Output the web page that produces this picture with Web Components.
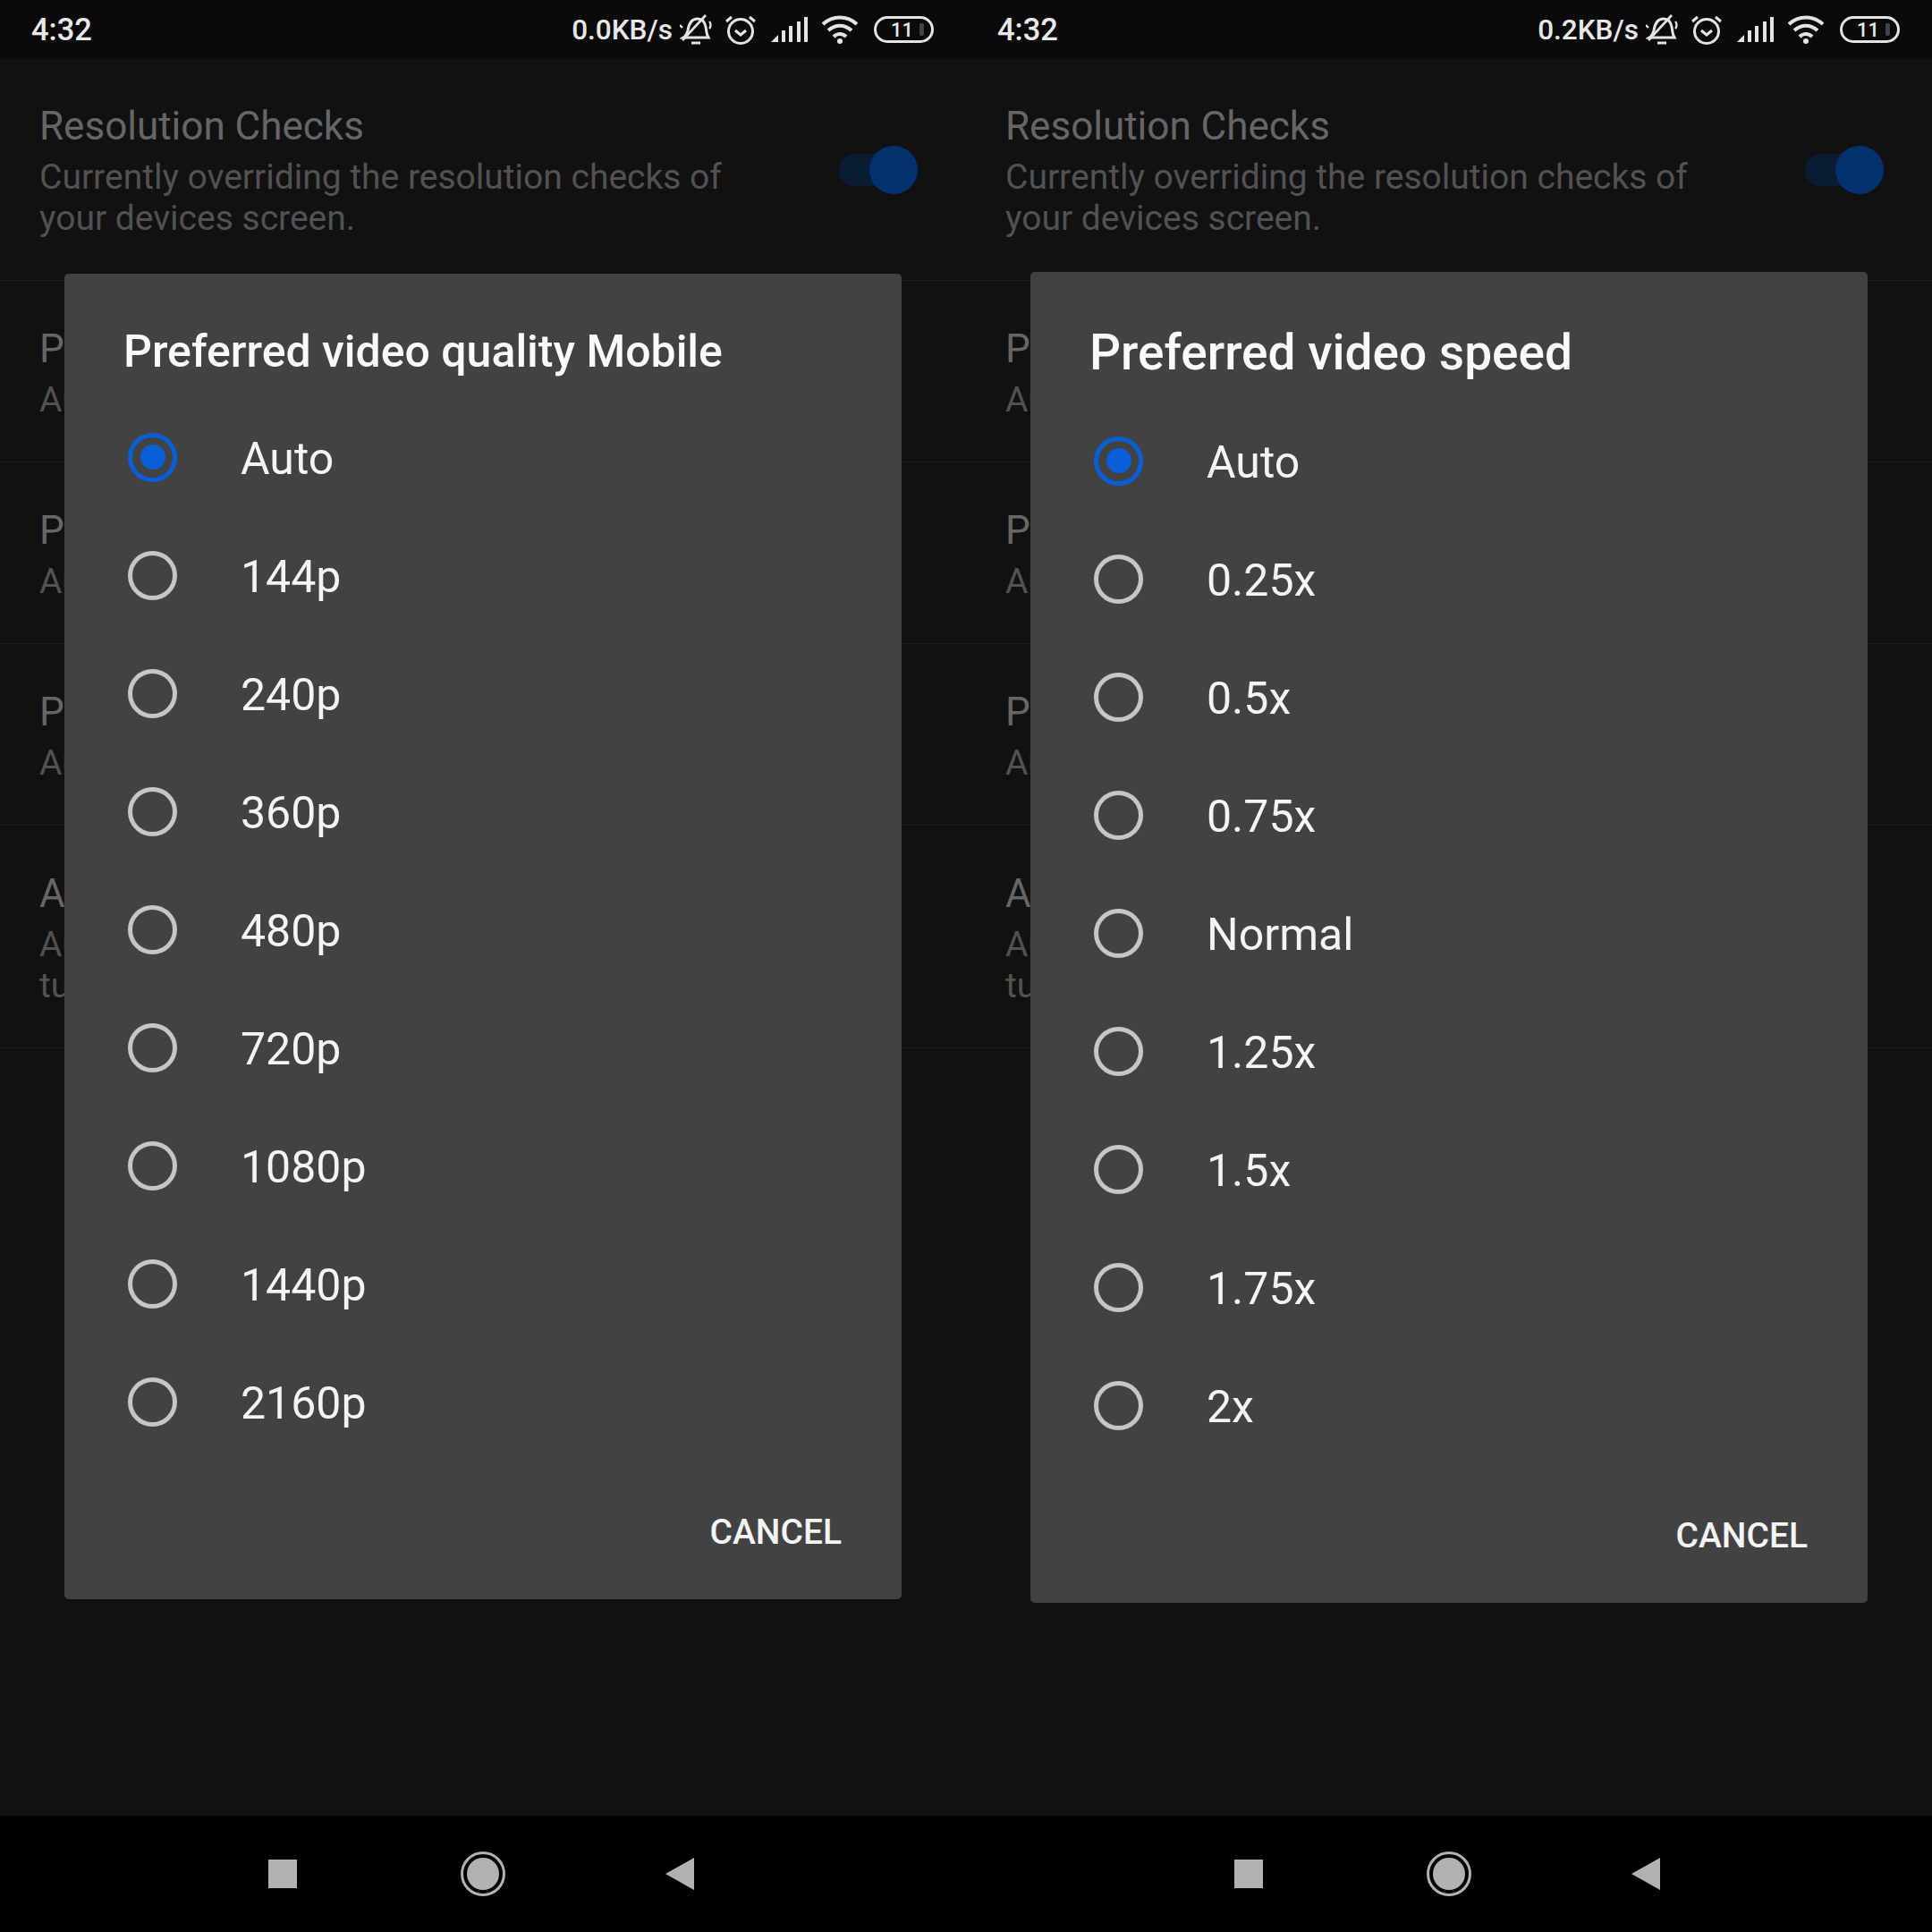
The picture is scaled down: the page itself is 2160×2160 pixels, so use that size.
<!DOCTYPE html>
<html>
<head>
<meta charset="utf-8">
<title>Preferred video settings</title>
<style>
	body {
		margin: 0;
		background: #000;
		font-family: Roboto, "Liberation Sans", sans-serif;
	}
	#screens {
		display: flex;
		width: 2160px;
		height: 2160px;
	}
</style>
</head>
<body>
<div id="screens">
	<phone-screen>
		<status-bar slot="status" speed="0.0KB/s"></status-bar>
		<settings-row style="--pad-top: 47px" on>
			<span slot="title">Resolution Checks</span>
			Currently overriding the resolution checks of<br>your devices screen.
		</settings-row>
		<settings-row><span slot="title">P</span>Au</settings-row>
		<settings-row><span slot="title">P</span>Au</settings-row>
		<settings-row><span slot="title">P</span>Au</settings-row>
		<settings-row><span slot="title">A</span>Au<br>tu</settings-row>
		<pref-dialog slot="dialog" heading="Preferred video quality Mobile"
			options="Auto,144p,240p,360p,480p,720p,1080p,1440p,2160p"
			style="--top: 306px; --head: 139px; --title-size: 50px; --title-center: 87px"></pref-dialog>
	</phone-screen>
	<phone-screen>
		<status-bar slot="status" speed="0.2KB/s"></status-bar>
		<settings-row style="--pad-top: 47px" on>
			<span slot="title">Resolution Checks</span>
			Currently overriding the resolution checks of<br>your devices screen.
		</settings-row>
		<settings-row><span slot="title">P</span>Au</settings-row>
		<settings-row><span slot="title">P</span>Au</settings-row>
		<settings-row><span slot="title">P</span>Au</settings-row>
		<settings-row><span slot="title">A</span>Au<br>tu</settings-row>
		<pref-dialog slot="dialog" heading="Preferred video speed"
			options="Auto,0.25x,0.5x,0.75x,Normal,1.25x,1.5x,1.75x,2x"
			style="--top: 304px; --head: 145px; --title-size: 55px; --title-center: 90px"></pref-dialog>
	</phone-screen>
</div>

<script>
	class PhoneScreen extends HTMLElement {
		constructor () {
			super();
			this.attachShadow({ mode: "open" }).innerHTML = `
				<style>
					:host {
						display: flex;
						flex-direction: column;
						position: relative;
						width: 1080px;
						height: 2160px;
						overflow: hidden;
					}
					#list {
						flex: 1;
						background: #111;
					}
				</style>
				<slot name="status"></slot>
				<div id="list"><slot></slot></div>
				<nav-bar></nav-bar>
				<slot name="dialog"></slot>
			`;
		}
	}

	class StatusBar extends HTMLElement {
		constructor () {
			super();
			this.attachShadow({ mode: "open" }).innerHTML = `
				<style>
					:host {
						display: flex;
						align-items: center;
						height: 66px;
						padding: 0 36px 0 35px;
						box-sizing: border-box;
						background: #0a0a0a;
						color: #e8e8e8;
						font-weight: 500;
					}
					#time {
						font-size: 34.500px;
						margin-right: auto;
					}
					#speed {
						font-size: 31.500px;
						margin-right: 8px;
					}
					svg {
						display: block;
						fill: none;
						stroke: #e4e4e4;
						stroke-width: 3;
					}
					#bell { margin-right: 15px; }
					#alarm { margin-right: 17px; }
					#signal { margin-right: 15px; }
					#wifi { margin-right: 17px; }
					#battery {
						display: flex;
						align-items: center;
						justify-content: center;
						box-sizing: border-box;
						width: 67px;
						height: 30px;
						border: 3px solid #e4e4e4;
						border-radius: 15px;
						font-size: 22px;
						padding-right: 6px;
					}
					#battery i {
						width: 5px;
						height: 14px;
						background: #444;
						border-radius: 2px;
						margin-left: 7px;
						margin-right: -14px;
					}
				</style>
				<span id="time">4:32</span>
				<span id="speed"></span>
				<svg id="bell" width="36" height="36" viewBox="0 0 36 36">
					<path d="M4 27c3-2 4-4 5-8 1-7 4-13 11-13 5 0 8 4 9 9l1 6c0 2 1 4 2 6z"/>
					<path d="M3 30 29 2" stroke-width="2.600"/>
					<path d="M13 33h10"/>
					<path d="M0 13l3 3M33 9c2 2 2 6 0 8" stroke-width="2.400"/>
				</svg>
				<svg id="alarm" width="34" height="36" viewBox="0 0 34 36">
					<circle cx="17" cy="20" r="13.500"/>
					<path d="M11 19l6 5 6-5"/>
					<path d="M1 9l6-5M33 9l-6-5"/>
				</svg>
				<svg id="signal" width="41" height="30" viewBox="0 0 41 30" style="stroke-width: 4">
					<path d="M0 29l8-8v8z" fill="#e4e4e4" stroke="none"/>
					<path d="M14 29V16M22 29V11M31 29V6M39 29V1"/>
				</svg>
				<svg id="wifi" width="42" height="34" viewBox="0 0 42 34" style="stroke-width: 4">
					<path d="M2 11c11-10 27-10 38 0"/>
					<path d="M8 18c8-7 18-7 26 0"/>
					<path d="M14 25c4-4 10-4 14 0"/>
					<circle cx="21" cy="30" r="3" fill="#e4e4e4" stroke="none"/>
				</svg>
				<div id="battery">11<i></i></div>
			`;
			this.shadowRoot.querySelector("#speed").textContent = this.getAttribute("speed");
		}
	}

	class SettingsRow extends HTMLElement {
		constructor () {
			super();
			const toggle = this.hasAttribute("on") ? "<settings-toggle></settings-toggle>" : "";
			this.attachShadow({ mode: "open" }).innerHTML = `
				<style>
					:host {
						display: flex;
						align-items: center;
						justify-content: space-between;
						padding: var(--pad-top, 49px) 54px 46px 44px;
						border-bottom: 1px solid #1c1c1c;
						margin-bottom: -1px;
					}
					#title {
						font-size: 44px;
						line-height: 57px;
						color: #666;
					}
					#sub {
						font-size: 39px;
						line-height: 46px;
						margin-top: 5px;
						color: #525252;
					}
				</style>
				<div>
					<div id="title"><slot name="title"></slot></div>
					<div id="sub"><slot></slot></div>
				</div>
				${toggle}
			`;
		}
	}

	class SettingsToggle extends HTMLElement {
		constructor () {
			super();
			this.attachShadow({ mode: "open" }).innerHTML = `
				<style>
					:host {
						display: flex;
						align-items: center;
					}
					#track {
						width: 60px;
						height: 36px;
						margin-right: -26px;
						border-radius: 18px;
						background: #0a1c34;
					}
					#knob {
						position: relative;
						width: 54px;
						height: 54px;
						border-radius: 50%;
						background: #03326e;
					}
				</style>
				<div id="track"></div>
				<div id="knob"></div>
			`;
		}
	}

	class PrefDialog extends HTMLElement {
		constructor () {
			super();
			this.attachShadow({ mode: "open" }).innerHTML = `
				<style>
					:host {
						display: block;
						position: absolute;
						left: 72px;
						top: var(--top);
						width: 936px;
						background: #424242;
						border-radius: 5px;
						color: #f4f4f4;
					}
					header {
						height: var(--head);
						padding-left: 66px;
						box-sizing: border-box;
					}
					h1 {
						margin: 0;
						font-size: var(--title-size);
						font-weight: 500;
						line-height: calc(var(--title-center) * 2);
						color: #fafafa;
					}
					footer {
						display: flex;
						justify-content: flex-end;
						align-items: flex-start;
						height: 155px;
						padding-right: 67px;
						box-sizing: border-box;
					}
					footer span {
						margin-top: 50px;
						font-size: 39px;
						line-height: 60px;
						font-weight: 500;
					}
				</style>
				<header><h1></h1></header>
				<div id="options"></div>
				<footer><span>CANCEL</span></footer>
			`;
			this.shadowRoot.querySelector("h1").textContent = this.getAttribute("heading");
			const options = this.shadowRoot.querySelector("#options");
			this.getAttribute("options").split(",").forEach((label, i) => {
				const option = document.createElement("radio-option");
				option.textContent = label;
				if (i === 0) option.setAttribute("checked", "");
				options.append(option);
			});
		}
	}

	class RadioOption extends HTMLElement {
		constructor () {
			super();
			this.attachShadow({ mode: "open" }).innerHTML = `
				<style>
					:host {
						display: flex;
						align-items: center;
						gap: 71px;
						height: 132px;
						padding-left: 71px;
						font-size: 50px;
					}
					#ring {
						display: flex;
						align-items: center;
						justify-content: center;
						box-sizing: border-box;
						width: 55px;
						height: 55px;
						border: 5px solid #c6c6c6;
						border-radius: 50%;
					}
					:host([checked]) #ring {
						border-color: #0a5fd8;
					}
					:host([checked]) #ring::after {
						content: "";
						width: 28px;
						height: 28px;
						border-radius: 50%;
						background: #0a5fd8;
					}
					#label {
						margin-top: 4px;
					}
				</style>
				<div id="ring"></div>
				<span id="label"><slot></slot></span>
			`;
		}
	}

	class NavBar extends HTMLElement {
		constructor () {
			super();
			this.attachShadow({ mode: "open" }).innerHTML = `
				<style>
					:host {
						display: flex;
						align-items: center;
						justify-content: center;
						gap: 174px;
						height: 130px;
						background: #000;
					}
					svg {
						display: block;
						fill: #b2b2b2;
					}
				</style>
				<svg width="50" height="50" viewBox="0 0 50 50"><rect x="9" y="9" width="32" height="32"/></svg>
				<svg width="50" height="50" viewBox="0 0 50 50">
					<circle cx="25" cy="25" r="23.500" fill="none" stroke="#b2b2b2" stroke-width="3"/>
					<circle cx="25" cy="25" r="18"/>
				</svg>
				<svg width="50" height="50" viewBox="0 0 50 50"><path d="M37 7v36L5 25z"/></svg>
			`;
		}
	}

	customElements.define("phone-screen", PhoneScreen);
	customElements.define("status-bar", StatusBar);
	customElements.define("settings-row", SettingsRow);
	customElements.define("settings-toggle", SettingsToggle);
	customElements.define("radio-option", RadioOption);
	customElements.define("pref-dialog", PrefDialog);
	customElements.define("nav-bar", NavBar);
</script>
</body>
</html>
